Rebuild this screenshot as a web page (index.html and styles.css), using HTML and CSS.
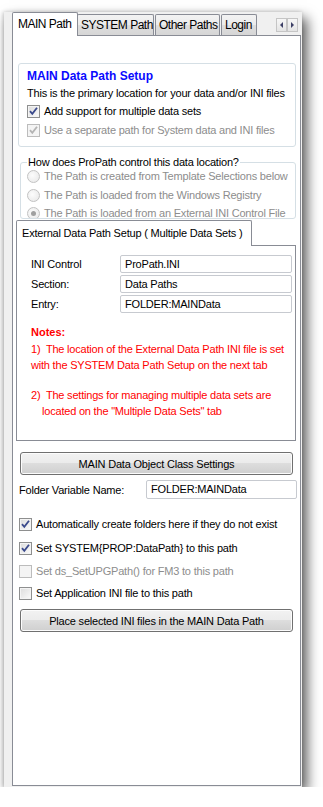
FILE: index.html
```html
<!DOCTYPE html>
<html lang="en">
<head>
    <meta charset="UTF-8">
    <title>ProPath - MAIN Path</title>
    <link rel="stylesheet" href="styles.css">
</head>
<body>
    <div class="window">
        <div class="tab-strip">
            <div class="tab active">MAIN Path</div>
            <div class="tab tab-system">SYSTEM Path</div>
            <div class="tab tab-other">Other Paths</div>
            <div class="tab tab-login">Login</div>
            <div class="tab-scroll">
                <span class="scroll-btn"><svg width="9" height="12" viewBox="0 0 9 12"><path d="M6 3 L3 6 L6 9 Z" fill="#3c3f66"/></svg></span>
                <span class="scroll-btn"><svg width="9" height="12" viewBox="0 0 9 12"><path d="M3 3 L6 6 L3 9 Z" fill="#3c3f66"/></svg></span>
            </div>
        </div>

        <div class="panel">
            <div class="group main-setup">
                <div class="group-title">MAIN Data Path Setup</div>
                <div class="row text-row">This is the primary location for your data and/or INI files</div>
                <div class="row check-row cb-multi">
                    <span class="cb"><svg width="11" height="11" viewBox="0 0 11 11"><path d="M2 5.2 L4.3 7.8 L9 1.8" fill="none" stroke="#3b4a8c" stroke-width="1.8"/></svg></span>
                    <span>Add support for multiple data sets</span>
                </div>
                <div class="row check-row cb-separate disabled">
                    <span class="cb"><svg width="11" height="11" viewBox="0 0 11 11"><path d="M2 5.2 L4.3 7.8 L9 1.8" fill="none" stroke="#b4b4b4" stroke-width="1.8"/></svg></span>
                    <span>Use a separate path for System data and INI files</span>
                </div>
            </div>

            <fieldset class="control-group">
                <legend>How does ProPath control this data location?</legend>
                <div class="row radio-row disabled r1"><span class="radio"></span><span>The Path is created from Template Selections below</span></div>
                <div class="row radio-row disabled r2"><span class="radio"></span><span>The Path is loaded from the Windows Registry</span></div>
                <div class="row radio-row disabled r3"><span class="radio checked"></span><span>The Path is loaded from an External INI Control File</span></div>
            </fieldset>

            <div class="inner-tabs">
                <div class="inner-tab">External Data Path Setup ( Multiple Data Sets )</div>
                <div class="inner-panel">
                    <div class="field f1"><label>INI Control</label><div class="input">ProPath.INI</div></div>
                    <div class="field f2"><label>Section:</label><div class="input">Data Paths</div></div>
                    <div class="field f3"><label>Entry:</label><div class="input">FOLDER:MAINData</div></div>

                    <div class="notes">
                        <div class="notes-title">Notes:</div>
                        <p>1)&nbsp; The location of the External Data Path INI file is set with the SYSTEM Data Path Setup on the next tab</p>
                        <p class="hang">2)&nbsp; The settings for managing multiple data sets are located on the "Multiple Data Sets" tab</p>
                    </div>
                </div>
            </div>

            <button class="win-button btn-class">MAIN Data Object Class Settings</button>

            <div class="folder-row">
                <label>Folder Variable Name:</label>
                <div class="input folder-input">FOLDER:MAINData</div>
            </div>

            <div class="row check-row lower c1">
                <span class="cb"><svg width="11" height="11" viewBox="0 0 11 11"><path d="M2 5.2 L4.3 7.8 L9 1.8" fill="none" stroke="#3b4a8c" stroke-width="1.8"/></svg></span>
                <span>Automatically create folders here if they do not exist</span>
            </div>
            <div class="row check-row lower c2">
                <span class="cb"><svg width="11" height="11" viewBox="0 0 11 11"><path d="M2 5.2 L4.3 7.8 L9 1.8" fill="none" stroke="#3b4a8c" stroke-width="1.8"/></svg></span>
                <span>Set SYSTEM{PROP:DataPath} to this path</span>
            </div>
            <div class="row check-row lower c3 disabled">
                <span class="cb"></span>
                <span>Set ds_SetUPGPath() for FM3 to this path</span>
            </div>
            <div class="row check-row lower c4">
                <span class="cb"></span>
                <span>Set Application INI file to this path</span>
            </div>

            <button class="win-button btn-place">Place selected INI files in the MAIN Data Path</button>
        </div>
    </div>
</body>
</html>
```

FILE: styles.css
```css
* {
    margin: 0;
    padding: 0;
    box-sizing: border-box;
}

body {
    font-family: "Liberation Sans", Arial, sans-serif;
    font-size: 11px;
    letter-spacing: -0.2px;
    color: #000;
    background: #fff;
}

.window {
    margin: 12px 0 0 4px;
    width: 298px;
    height: 775px;
    padding: 0 1px 0 8px;
    background: #f0f0f0;
    box-shadow: 5px 6px 12px rgba(0, 0, 0, 0.65), -1px 0 4px rgba(0, 0, 0, 0.2);
    display: flex;
    flex-direction: column;
}

/* tab strip */

.tab-strip {
    height: 23px;
    display: flex;
    align-items: flex-start;
    position: relative;
    z-index: 1;
}

.tab {
    height: 21px;
    margin-top: 2px;
    padding: 0 3px;
    border: 1px solid #898c95;
    border-bottom: none;
    border-radius: 2px 2px 0 0;
    background: linear-gradient(#f3f3f3, #ebebeb 50%, #dedede 50%, #d6d6d6);
    font-size: 12px;
    letter-spacing: -0.5px;
    line-height: 20px;
    white-space: nowrap;
}

.tab.active {
    height: 24px;
    margin-top: 0;
    width: 66px;
    padding-left: 5px;
    background: #fff;
    line-height: 22px;
}

.tab-system {
    width: 77px;
    margin-left: -1px;
}

.tab-other {
    width: 65px;
    margin-left: 1px;
}

.tab-login {
    width: 36px;
    margin-left: 1px;
}

.tab-scroll {
    margin: 6px 3px 0 auto;
    display: flex;
}

.scroll-btn {
    width: 11px;
    height: 14px;
    border: 1px solid #c5c5c5;
    background: linear-gradient(#f7f7f7, #e4e4e4);
    display: flex;
    align-items: center;
    justify-content: center;
}

.panel {
    flex: 1;
    margin-bottom: 1px;
    width: 289px;
    border: 1px solid #898c95;
    background: #fff;
    display: flex;
    flex-direction: column;
    align-items: flex-start;
}

/* common rows */

.row {
    height: 14px;
    line-height: 14px;
    display: flex;
    align-items: center;
    white-space: nowrap;
}

.disabled {
    color: #8d8d8d;
}

.cb {
    width: 13px;
    height: 13px;
    margin-right: 4px;
    border: 1px solid #8e8f8f;
    background: linear-gradient(135deg, #dcdcdc, #fbfbfb);
    box-shadow: inset 0 0 0 1px #f4f4f4;
    flex-shrink: 0;
}

.cb svg {
    display: block;
}

.disabled .cb {
    border-color: #bcbcbc;
    background: #f4f4f4;
}

.radio {
    width: 13px;
    height: 13px;
    margin-right: 4px;
    border: 1px solid #c2c2c2;
    border-radius: 50%;
    background: radial-gradient(circle at 40% 40%, #fcfcfc, #e6e6e6);
    flex-shrink: 0;
    display: flex;
    align-items: center;
    justify-content: center;
}

.radio.checked::after {
    content: "";
    width: 5px;
    height: 5px;
    border-radius: 50%;
    background: #a0a0a0;
}

/* group 1 */

.group {
    margin: 27px 0 0 5px;
    width: 278px;
    height: 84px;
    padding: 5px 0 0 8px;
    border: 1px solid #d5dfe5;
    border-radius: 3px;
}

.group-title {
    height: 14px;
    line-height: 14px;
    font-size: 12px;
    font-weight: bold;
    letter-spacing: 0;
    color: #0a0aff;
}

.text-row {
    margin-top: 3px;
}

.cb-multi {
    margin-top: 4px;
}

.cb-separate {
    margin-top: 5px;
}

/* group 2 */

.control-group {
    margin: 8px 0 0 7px;
    width: 276px;
    height: 64px;
    padding: 0 6px;
    border: 1px solid #d5dfe5;
    border-radius: 3px;
    overflow: hidden;
}

.control-group legend {
    padding: 0 1px;
    height: 14px;
    line-height: 14px;
}

.r2 {
    margin-top: 5px;
}

.r3 {
    margin-top: 4px;
}

/* inner tab control */

.inner-tabs {
    margin: 1px 0 0 3px;
    width: 280px;
    position: relative;
    z-index: 1;
}

.inner-tab {
    width: 236px;
    height: 26px;
    margin-bottom: -1px;
    padding-left: 5px;
    border: 1px solid #898c95;
    border-bottom: none;
    border-radius: 2px 2px 0 0;
    background: #fff;
    line-height: 25px;
    position: relative;
    z-index: 1;
}

.inner-panel {
    height: 196px;
    padding: 9px 3px 0 14px;
    border: 1px solid #898c95;
    background: #fff;
}

.field {
    display: flex;
    align-items: center;
    height: 18px;
}

.field + .field {
    margin-top: 2px;
}

.field label {
    width: 89px;
}

.input {
    height: 18px;
    border: 1px solid #c7cad0;
    border-radius: 2px;
    padding-left: 4px;
    line-height: 16px;
    background: #fff;
}

.field .input {
    width: 172px;
}

.notes {
    margin-top: 11px;
    color: #f00;
    line-height: 16.5px;
}

.notes-title {
    font-weight: bold;
    letter-spacing: 0;
}

.notes p + p {
    margin-top: 13px;
}

.notes .hang {
    padding-left: 11px;
    text-indent: -11px;
}

/* buttons and lower area */

.win-button {
    font: inherit;
    letter-spacing: inherit;
    color: #000;
    width: 273px;
    height: 23px;
    margin-left: 7px;
    border: 1px solid #707070;
    border-radius: 3px;
    background: linear-gradient(#f2f2f2, #ebebeb 50%, #dddddd 50%, #cfcfcf);
    box-shadow: inset 0 0 0 1px #fcfcfc;
}

.btn-class {
    margin-top: 11px;
}

.btn-place {
    margin-top: 9px;
}

.folder-row {
    margin: 5px 0 0 6px;
    display: flex;
    align-items: center;
    width: 284px;
}

.folder-row label {
    width: 127px;
}

.folder-input {
    width: 151px;
    height: 19px;
    line-height: 17px;
}

.lower {
    margin-left: 6px;
}

.c1 {
    margin-top: 18px;
}

.c2 {
    margin-top: 10px;
}

.c3 {
    margin-top: 9px;
}

.c4 {
    margin-top: 8px;
}
```
